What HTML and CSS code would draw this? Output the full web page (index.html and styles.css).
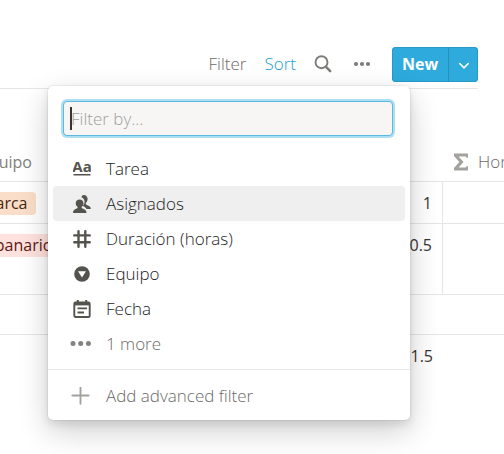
FILE: index.html
```html
<!DOCTYPE html>
<html lang="es">
<head>
<meta charset="utf-8">
<title>Tareas</title>
<link rel="stylesheet" href="styles.css">
</head>
<body>
<main class="view">
  <header class="toolbar">
    <button class="tool" type="button">Filter</button>
    <button class="tool tool-active" type="button">Sort</button>
    <button class="tool tool-icon" type="button" aria-label="Search">
      <svg width="18" height="18" viewBox="0 0 18 18" fill="none" stroke="currentColor"><circle cx="7.5" cy="7.2" r="6" stroke-width="1.9"/><path d="M12 11.8l4.2 4.3" stroke-width="2.5" stroke-linecap="round"/></svg>
    </button>
    <button class="tool tool-icon tool-dots" type="button" aria-label="Options">
      <svg width="18" height="18" viewBox="0 0 18 18" fill="currentColor"><circle cx="3" cy="9" r="2.1"/><circle cx="9" cy="9" r="2.1"/><circle cx="15" cy="9" r="2.1"/></svg>
    </button>
    <div class="split">
      <button class="new" type="button">New</button>
      <button class="caret" type="button" aria-label="Templates">
        <svg width="12" height="8" viewBox="0 0 12 8" fill="none" stroke="currentColor" stroke-width="1.600" stroke-linecap="round"><path d="M1.7 1.5L6 5.9l4.300-4.400"/></svg>
      </button>
    </div>
  </header>

  <div class="scroller">
    <table class="grid">
      <thead>
        <tr>
          <th class="col-team">Equipo</th>
          <th class="col-hours"></th>
          <th class="col-sum"><span class="head"><svg width="16" height="18" viewBox="0 0 16 18" fill="currentColor"><path d="M1 0.500h14v4.200h-1.800V3.600H5.600L10.600 9l-5 5.400h7.600v-1.100H15v4.200H1v-2.600L6.300 9 1 3.100z"/></svg>Horas</span></th>
        </tr>
      </thead>
      <tbody>
        <tr class="row-short"><td><span class="tag tag-orange">Comarca</span></td><td class="num">1</td><td></td></tr>
        <tr class="row-tall"><td><span class="tag tag-red">Campanario</span></td><td class="num">0.5</td><td></td></tr>
        <tr class="row-new"><td colspan="3"></td></tr>
      </tbody>
      <tfoot>
        <tr><td></td><td class="num">1.5</td><td></td></tr>
      </tfoot>
    </table>
  </div>

  <section class="menu" aria-label="Filter">
    <div class="search">
      <input class="field" type="text" placeholder="Filter by..." aria-label="Filter by">
      <span class="cursor"></span>
    </div>
    <div class="items">
      <button class="item" type="button">
        <svg width="18" height="18" viewBox="0 0 18 18" fill="currentColor"><text class="glyph" x="9" y="12" text-anchor="middle">Aa</text><path d="M0.500 14h17v1.500h-17z"/></svg><span>Tarea</span></button>
      <button class="item item-hover" type="button">
        <svg width="18" height="18" viewBox="0 0 18 18" fill="currentColor"><path d="M10.800 0c2.400 0 3.800 1.700 3.800 4 0 1.700-.7 3-1.800 3.900v.8c0 .6.4 1 1.100 1.300 2.500 1 3.900 1.800 3.900 3.900h-4.300c-.8-1.700-2.300-2.400-3.700-3 1.200-1.200 1.700-2.600 1.700-4.200 0-2.100-1.100-3.900-3.100-4.500C8.800.8 9.700 0 10.800 0z"/><path d="M6.600 4.400c2.200 0 3.900 1.600 3.900 3.900 0 1.700-.8 3-1.900 3.700v.6c0 .5.3.7.900.9 2.800 1 4 1.900 4 4.500H0c0-2.600 1.100-3.500 3.700-4.500.6-.2.9-.4.9-.9V12c-1.100-.7-1.900-2-1.900-3.700 0-2.300 1.700-3.900 3.900-3.900z"/></svg><span>Asignados</span></button>
      <button class="item" type="button">
        <svg width="18" height="18" viewBox="0 0 18 18" fill="none" stroke="currentColor" stroke-width="2.400" stroke-linecap="round"><path d="M5.500 1.200v15.600M12.300 1.200v15.600M1.300 5.400h15.400M1.300 12.300h15.400"/></svg><span>Duración (horas)</span></button>
      <button class="item" type="button">
        <svg width="18" height="18" viewBox="0 0 18 18"><circle cx="9" cy="9" r="7.800" fill="currentColor"/><path class="notch" d="M5 6.300h8L9 12.400z"/></svg><span>Equipo</span></button>
      <button class="item" type="button">
        <svg width="18" height="18" viewBox="0 0 18 18" fill="none" stroke="currentColor"><rect x="1.300" y="2.500" width="15.400" height="14.500" rx="1.300" stroke-width="1.900"/><path d="M1 3.800h16" stroke-width="3.200"/><path d="M4.800 .1v3M13.200 .1v3" stroke-width="2"/><path d="M4.500 8.400h9.500M4.500 12.500h6.500" stroke-width="1.800"/></svg><span>Fecha</span></button>
      <button class="item item-muted" type="button">
        <svg class="wide" width="22" height="18" viewBox="0 0 22 18" fill="currentColor"><circle cx="3" cy="8.500" r="2.500"/><circle cx="10.700" cy="8.500" r="2.500"/><circle cx="18.400" cy="8.500" r="2.500"/></svg><span>1 more</span></button>
    </div>
    <div class="footer">
      <button class="item item-muted" type="button">
        <svg class="wide plus" width="22" height="18" viewBox="0 0 22 18" fill="none" stroke="currentColor" stroke-width="1.900" stroke-linecap="round"><path d="M10.500 .5v16.200M2.400 8.500h16.200"/></svg><span>Add advanced filter</span></button>
    </div>
  </section>
</main>
</body>
</html>
```
FILE: styles.css
```css
* { box-sizing: border-box; }

body {
  margin: 0;
  background: #fff;
  color: #37352f;
  font-family: "Open Sans", "Noto Sans", sans-serif;
  font-size: 16px;
  line-height: 24px;
  overflow: hidden;
}

button {
  border: 0;
  padding: 0;
  background: none;
  color: inherit;
  font: inherit;
}

svg { display: block; flex: none; }

.view {
  position: relative;
  min-height: 100vh;
  padding-top: 40px;
}

.toolbar {
  display: flex;
  align-items: center;
  justify-content: flex-end;
  gap: 18px;
  height: 49px;
  margin-right: 26px;
  border-bottom: 1px solid #e6e6e5;
}

.tool { color: #6b6a66; font-size: 17px; font-weight: 300; }
.tool-active { color: #1c9fd4; }
.tool-icon { color: #7d7c78; }
.tool-dots { margin: 0 3px; }

.split {
  display: flex;
  height: 35px;
  overflow: hidden;
  border-radius: 4px;
  background: #2eaadc;
  box-shadow: inset 0 0 0 1px #2799c7;
  color: #fff;
}

.new { width: 57px; border-right: 1px solid #2590bb; font-weight: 700; }
.caret { display: grid; place-items: center; width: 29px; padding-top: 3px; }

.scroller { margin-top: 53px; overflow: hidden; }

.grid {
  width: calc(100% + 170px);
  margin-left: -55px;
  border-collapse: separate;
  border-spacing: 0;
  table-layout: fixed;
}

.grid th {
  height: 40px;
  padding: 0 10px;
  border-bottom: 1px solid #e6e6e5;
  color: #807f7b;
  font-weight: 400;
  text-align: left;
}

.col-team { width: 200px; }
.grid .col-team { padding-left: 35px; }
.col-hours { width: 298px; }
.head { display: flex; align-items: center; gap: 9px; color: #6b6a66; font-size: 17px; font-weight: 300; }
.head svg { color: #a3a29f; }

.grid td {
  padding: 9px 10px 0 8px;
  border-bottom: 1px solid #e6e6e5;
  vertical-align: top;
}

.grid tbody .num { border-right: 1px solid #e6e6e5; }
.grid tfoot td { border-bottom: 0; }
.num { text-align: right; }
.row-short { height: 42px; }
.row-tall { height: 71px; }
.row-new { height: 40px; }

.tag {
  display: inline-block;
  padding: 0 8px;
  border-radius: 4px;
  line-height: 23px;
}

.tag-orange { background: #fadec9; color: #49290e; }
.tag-red { background: #ffe2dd; color: #5d1715; }

.menu {
  position: absolute;
  top: 86px;
  right: 94px;
  width: 362px;
  border-radius: 5px;
  background: #fff;
  box-shadow: 0 0 0 1px rgba(15, 15, 15, 0.05), 0 4px 8px rgba(15, 15, 15, 0.1), 0 11px 30px rgba(15, 15, 15, 0.2);
}

.search { position: relative; padding: 15px 17px 15px 15px; }

.field {
  display: block;
  width: 100%;
  height: 35px;
  padding: 0 7px;
  border: 1px solid #5bb8de;
  border-radius: 4px;
  outline: none;
  background: #f7f6f5;
  box-shadow: 0 0 0 2px #abdff1;
  color: inherit;
  font: inherit;
  font-size: 17px;
  font-weight: 300;
}

.field::placeholder { color: #a09f9b; opacity: 1; }

.cursor {
  position: absolute;
  top: 21px;
  left: 22px;
  width: 2px;
  height: 23px;
  background: #37352f;
}

.items { padding: 0 5px 8px; }

.item {
  display: flex;
  align-items: center;
  gap: 15px;
  width: 100%;
  height: 35px;
  padding: 0 19px 0 20px;
  border-radius: 4px;
  color: #55534e;
  font-size: 17px;
  font-weight: 300;
  text-align: left;
}

.item span { color: #24221d; }
.item-hover { background: #efefef; }
.item-muted { color: #84837f; }
.item-muted span { color: #6b6a66; }
.wide { margin: 0 -1px 0 -3px; }
.plus { color: #a3a29f; }
.notch { fill: #fff; }
.glyph { font-size: 15px; font-weight: 700; }

.footer { padding: 8px 5px 7px; border-top: 1px solid #e9e9e8; }
```
